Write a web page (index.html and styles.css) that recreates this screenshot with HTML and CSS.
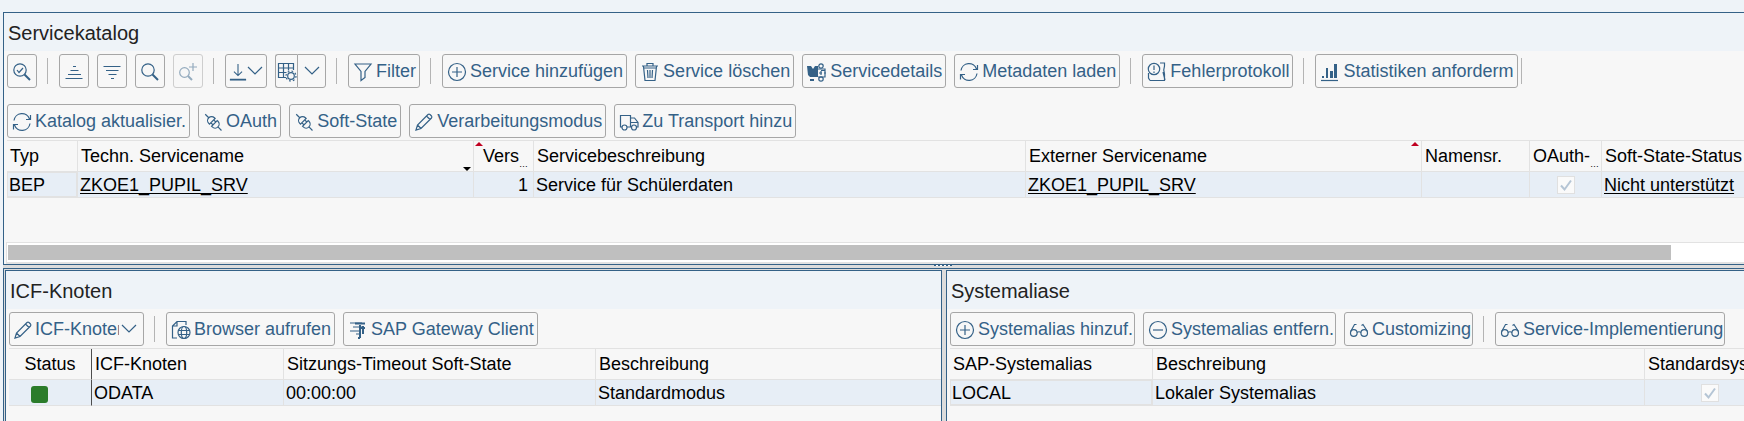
FILE: index.html
```html
<!DOCTYPE html>
<html lang="de">
<head>
<meta charset="utf-8">
<meta name="viewport" content="width=device-width, initial-scale=1">
<title>Servicekatalog</title>
<link rel="stylesheet" href="styles.css">
</head>
<body>
<svg class="defs" aria-hidden="true">
  <symbol id="i-refresh" viewBox="0 0 20 20"><path d="M2 8.500A8 8 0 0 1 17.500 7M18.500 3v4.500h-4.500M18 11.500A8 8 0 0 1 2.500 13M1.500 17.500V12.500h4.500"/></symbol>
  <symbol id="i-connect" viewBox="0 0 20 20"><g transform="rotate(45 10 10)"><path d="M-1 10h5M9 6H8a4 4 0 0 0 0 8h1zM9 8h3M9 12h3M12 6h1a4 4 0 0 1 0 8h-1zM17 10h5"/></g></symbol>
  <symbol id="i-pencil" viewBox="0 0 20 20"><path d="M2 18l1.500-5L14 2.500q1-.800 2 0l1.500 1.500q.800 1 0 2L7 16.500zM12.500 4l3.500 3.500M3.500 13L7 16.500"/></symbol>
  <symbol id="i-plus" viewBox="0 0 20 20"><circle cx="10" cy="10" r="8.500"/><path d="M10 5v10M5 10h10"/></symbol>
  <symbol id="i-minus" viewBox="0 0 20 20"><circle cx="10" cy="10" r="8.500"/><path d="M5 10h10"/></symbol>
  <symbol id="i-glasses" viewBox="0 0 20 20"><circle cx="4.800" cy="13" r="3.300"/><circle cx="15.200" cy="13" r="3.300"/><path d="M8 12.500q2-1.500 4 0M1.700 11.500L5.500 4.500h2M12.500 5.500l1.500-1 4.500 7"/></symbol>
  <symbol id="i-down" viewBox="0 0 16 20"><path d="M1 6l7 7 7-7"/></symbol>
  <symbol id="i-check" viewBox="0 0 18 18"><path d="M4 9.500l3.500 4L14 4.500"/></symbol>
</svg>

<main class="page">
  <section class="panel catalog">
    <h1 class="title">Servicekatalog</h1>
    <div class="toolbar">
      <div class="row">
        <button class="btn square" aria-label="Details"><svg class="icon" viewBox="0 0 20 20"><circle cx="8" cy="8" r="6.200"/><path d="M5 8l2 2.500L11 6"/><path class="bold" d="M12.500 12.500L18 18"/></svg></button>
        <span class="sep"></span>
        <button class="btn square" aria-label="Aufsteigend sortieren"><svg class="icon" viewBox="0 0 20 20"><path d="M9 4.500h3M6.500 8.500h8M4 12.500h13M1.500 16.500h17"/></svg></button>
        <button class="btn square" aria-label="Absteigend sortieren"><svg class="icon" viewBox="0 0 20 20"><path d="M1.500 4.500h17M4 8.500h12.500M6.500 12.500h8M9 16.500h3"/></svg></button>
        <button class="btn square" aria-label="Suchen"><svg class="icon" viewBox="0 0 20 20"><circle cx="8" cy="8" r="6.200"/><path class="bold" d="M12.500 12.500L18 18"/></svg></button>
        <button class="btn square" aria-label="Weitersuchen" disabled><svg class="icon" viewBox="0 0 20 20"><circle cx="6.500" cy="10.500" r="4.800"/><path d="M15 1v8M11 5h8"/><path class="bold" d="M10 14l4 4"/></svg></button>
        <span class="sep"></span>
        <button class="btn export" aria-label="Exportieren"><svg class="icon" viewBox="0 0 20 20"><path d="M10 1v13M5.500 9.500l4.500 4.500 4.500-4.500"/><path class="bold" d="M1 18.500h18"/></svg><svg class="chev"><use href="#i-down"/></svg></button>
        <span class="split">
          <button class="btn layout" aria-label="Layout"><svg class="icon" viewBox="0 0 20 20"><path d="M9 15.500H1.500V1.500h15V8M1.500 6h15M1.500 10.500h8M6.500 1.500v14M11.500 1.500v7"/><circle cx="14" cy="14" r="3.300"/><circle cx="14" cy="14" r="5" stroke-dasharray="1.800 2.100"/></svg></button><button class="btn menu" aria-label="Layoutmenü"><svg class="chev"><use href="#i-down"/></svg></button>
        </span>
        <span class="sep"></span>
        <button class="btn"><svg class="icon" viewBox="0 0 20 20"><path d="M2 2h16l-6 7.500v6L8 18.500v-9z"/></svg>Filter</button>
        <span class="sep"></span>
        <button class="btn"><svg class="icon"><use href="#i-plus"/></svg>Service hinzufügen</button>
        <button class="btn"><svg class="icon" viewBox="0 0 20 20"><path d="M2 4h16M7 3.500V1.500h6v2M3.500 4.500L5 18.500h10l1.500-14M4 6h12M7.500 8l.500 8M10 8v8M12.500 8l-.500 8"/></svg>Service löschen</button>
        <button class="btn"><svg class="icon" viewBox="0 0 20 20"><path class="fill" d="M0 4h4l2 3 2-3h3v11H3L1 13zM3 17h4v2H3z"/><circle cx="14" cy="4" r="2.200"/><circle cx="14" cy="17" r="2.200"/><path d="M11 7h7v8h-7M14 8.500h4M12 11h3M14 9v4M17 11h2"/></svg>Servicedetails</button>
        <button class="btn"><svg class="icon"><use href="#i-refresh"/></svg>Metadaten laden</button>
        <span class="sep"></span>
        <button class="btn"><svg class="icon" viewBox="0 0 20 20"><circle cx="7" cy="7" r="5.700"/><path d="M7 3.500v4.500M7 9.500v1.500M13 1h4.500v3q-1.500 4 0 8v6.500H3M1.500 11v5l1.500 2.500M16 10l2 8"/></svg>Fehlerprotokoll</button>
        <span class="sep"></span>
        <button class="btn"><svg class="icon" viewBox="0 0 20 20"><path d="M1 18.500h17"/><path class="fill" d="M2 14h2v2H2zM6 6h2v10H6zM10 9h3v7h-3zM14 2h3v14h-3z"/></svg>Statistiken anforderm</button>
        <span class="sep last"></span>
      </div>
      <div class="row">
        <button class="btn"><svg class="icon"><use href="#i-refresh"/></svg>Katalog aktualisier.</button>
        <button class="btn"><svg class="icon"><use href="#i-connect"/></svg>OAuth</button>
        <button class="btn"><svg class="icon"><use href="#i-connect"/></svg>Soft-State</button>
        <button class="btn"><svg class="icon"><use href="#i-pencil"/></svg>Verarbeitungsmodus</button>
        <button class="btn"><svg class="icon" viewBox="0 0 20 20"><path d="M3 15H1.500V3.500h10V15M8 15h4.500M11.500 6h4l3.500 4.500V15h-1.500M11.500 10.500H19"/><circle cx="5.500" cy="15.500" r="2.500"/><circle cx="15" cy="15.500" r="2.500"/></svg>Zu Transport hinzu</button>
      </div>
    </div>
    <div class="grid">
      <table>
        <colgroup><col class="c-typ"><col class="c-name"><col class="c-vers"><col class="c-desc"><col class="c-ext"><col class="c-ns"><col class="c-oauth"><col></colgroup>
        <thead>
          <tr><th>Typ</th><th>Techn. Servicename<i class="sorted"></i></th><th class="num"><i class="key"></i>Vers<span class="dots">…</span></th><th>Servicebeschreibung</th><th>Externer Servicename<i class="key end"></i></th><th>Namensr.</th><th>OAuth-<span class="dots">…</span></th><th>Soft-State-Status</th></tr>
        </thead>
        <tbody>
          <tr><td class="focus">BEP</td><td><a href="#srv">ZKOE1_PUPIL_SRV</a></td><td class="num">1</td><td>Service für Schülerdaten</td><td><a href="#ext">ZKOE1_PUPIL_SRV</a></td><td></td><td class="mid"><label class="tick"><input type="checkbox" checked disabled aria-label="OAuth"><svg><use href="#i-check"/></svg></label></td><td><a href="#state">Nicht unterstützt</a></td></tr>
        </tbody>
      </table>
    </div>
    <div class="scroll"><div class="thumb"></div></div>
  </section>

  <div class="splitter"><span class="grip"></span></div>

  <div class="lower">
    <section class="panel inner">
      <h2 class="title">ICF-Knoten</h2>
      <div class="toolbar">
        <div class="row">
          <button class="btn node"><svg class="icon"><use href="#i-pencil"/></svg><span class="clip">ICF-Knoten</span><svg class="chev"><use href="#i-down"/></svg></button>
          <span class="sep"></span>
          <button class="btn"><svg class="icon" viewBox="0 0 20 20"><path d="M6 18H1.500V6L6 1.500h9V5M1.500 6H6V1.500"/><circle cx="13" cy="12.500" r="6"/><ellipse cx="13" cy="12.500" rx="2.700" ry="6"/><path d="M7.500 10.500h11M7.500 14.500h11"/></svg>Browser aufrufen</button>
          <button class="btn"><svg class="icon" viewBox="0 0 20 20"><path d="M2 3h12M5 7h9M2 11h9M8 14h4"/><path class="bold" d="M7 3.500h10M12 5v13M12 18h-2M15 6v8M11 8h6"/></svg>SAP Gateway Client</button>
        </div>
      </div>
      <div class="grid">
        <table>
          <colgroup><col class="c-status"><col class="c-icf"><col class="c-time"><col></colgroup>
          <thead><tr><th class="mid">Status</th><th class="fixed">ICF-Knoten</th><th>Sitzungs-Timeout Soft-State</th><th>Beschreibung</th></tr></thead>
          <tbody><tr><td><span class="led" role="img" aria-label="Aktiv"></span></td><td class="fixed">ODATA</td><td>00:00:00</td><td>Standardmodus</td></tr></tbody>
        </table>
      </div>
    </section>
    <section class="panel inner open">
      <h2 class="title">Systemaliase</h2>
      <div class="toolbar">
        <div class="row tight">
          <button class="btn"><svg class="icon"><use href="#i-plus"/></svg>Systemalias hinzuf.</button>
          <button class="btn"><svg class="icon"><use href="#i-minus"/></svg>Systemalias entfern.</button>
          <button class="btn"><svg class="icon"><use href="#i-glasses"/></svg>Customizing</button>
          <span class="sep"></span>
          <button class="btn"><svg class="icon"><use href="#i-glasses"/></svg>Service-Implementierung</button>
        </div>
      </div>
      <div class="grid">
        <table class="wide">
          <colgroup><col class="c-alias"><col class="c-desc"><col class="c-std"></colgroup>
          <thead><tr><th>SAP-Systemalias</th><th>Beschreibung</th><th>Standardsystem</th></tr></thead>
          <tbody><tr><td class="focus">LOCAL</td><td>Lokaler Systemalias</td><td class="mid"><label class="tick"><input type="checkbox" checked disabled aria-label="Standardsystem"><svg><use href="#i-check"/></svg></label></td></tr></tbody>
        </table>
      </div>
    </section>
  </div>
</main>
</body>
</html>
```
FILE: styles.css
```css
* { box-sizing: border-box; }

html, body { height: 100%; }

body {
  margin: 0;
  overflow: hidden;
  background: #eef3f8;
  color: #000;
  font: 18px/24px "Liberation Sans", Arial, sans-serif;
}

.defs { position: absolute; width: 0; height: 0; }

.page {
  display: flex;
  flex-direction: column;
  min-height: 100%;
  padding: 12px 0 0 3px;
}

.panel {
  min-width: 0;
  background: #f7f7f7;
  border: 1px solid #346187;
}

.catalog { border-right: 0; }

.title {
  margin: 0;
  padding: 8px 4px 6px;
  background: #eef3f8;
  color: #222;
  font-size: 20px;
  font-weight: 400;
  line-height: 24px;
}

.toolbar {
  display: flex;
  flex-direction: column;
  gap: 16px;
  padding: 3px 3px 2px;
}

.row { display: flex; align-items: center; gap: 8px; }

.btn {
  display: flex;
  flex: none;
  align-items: center;
  gap: 3px;
  height: 34px;
  padding: 0 3px 0 4px;
  background: #f7f7f7;
  border: 1px solid #a6a6a6;
  border-radius: 3px;
  color: #346187;
  font: inherit;
  white-space: nowrap;
}

.btn:disabled { opacity: .5; }
.btn .icon { margin-top: 2px; }
.tight .btn { padding-right: 1px; }

.square { width: 30px; padding: 0 4px; }
.square .icon { width: 20px; }

.export { width: 42px; gap: 0; padding: 0 3px; }
.export .icon { width: 18px; }
.split { display: flex; }
.layout { width: 22px; padding: 0 1px; border-right: 0; border-radius: 3px 0 0 3px; }
.menu { justify-content: center; width: 29px; padding: 0; border-radius: 0 3px 3px 0; }

.node { gap: 2px; padding: 0 6px 0 3px; }
.clip { width: 84px; overflow: hidden; text-align: left; }

.icon, .chev, .tick svg {
  flex: none;
  fill: none;
  stroke: currentColor;
  stroke-width: 1.2;
}
.icon { width: 20px; height: 20px; }
.chev { width: 16px; height: 20px; }
.bold { stroke-width: 2; }
.fill { fill: currentColor; stroke: none; }

.sep {
  flex: none;
  width: 2px;
  height: 26px;
  margin: 0 2px;
  border-left: 1px solid #b4b4b4;
}
.last { margin-left: -5px; }

.grid {
  flex: 1;
  padding-left: 3px;
  overflow: hidden;
}
.catalog .grid { min-height: 102px; }

table {
  width: 100%;
  table-layout: fixed;
  border-collapse: separate;
  border-spacing: 0;
  border-top: 1px solid #e2e2e2;
}
.wide { width: 826px; }

.c-typ { width: 70px; }
.c-name { width: 396px; }
.c-vers { width: 60px; }
.c-desc { width: 492px; }
.c-ext { width: 396px; }
.c-ns { width: 108px; }
.c-oauth { width: 72px; }
.c-status { width: 82px; }
.c-icf { width: 192px; }
.c-time { width: 312px; }
.c-alias { width: 202px; }
.c-std { width: 132px; }

th, td {
  position: relative;
  padding: 0 0 0 2px;
  overflow: hidden;
  border-bottom: 1px solid #e2e2e2;
  border-left: 1px solid #e2e2e2;
  text-align: left;
  white-space: nowrap;
}
th { height: 31px; padding-left: 3px; font-weight: 400; }
td { height: 26px; background: #e7eef6; }
th:first-child, td:first-child { border-left: 0; }
.num { padding-right: 5px; text-align: right; }
.mid { padding: 0; text-align: center; }
.focus { box-shadow: inset -1px -1px #e2e2e2, inset 1px 1px #e2e2e2; }
.fixed { border-left-color: #4d4d4d; }

a {
  color: inherit;
  text-decoration: underline 1px;
  text-decoration-skip-ink: none;
  text-underline-offset: 2px;
}

.dots { font-size: 9px; line-height: 1; vertical-align: sub; }

.sorted {
  position: absolute;
  right: 2px;
  bottom: 0;
  border: 4px solid transparent;
  border-top-color: #000;
  border-bottom: 0;
}
.key {
  position: absolute;
  top: 1px;
  left: 1px;
  border: 4px solid transparent;
  border-bottom-color: #c00020;
  border-top: 0;
}
.key.end { right: 2px; left: auto; }

.tick {
  display: block;
  position: relative;
  width: 18px;
  height: 18px;
  margin: 0 auto;
}
.tick input {
  display: block;
  width: 18px;
  height: 18px;
  margin: 0;
  appearance: none;
  background: #fafafa;
  border: 1px solid #e0e0e0;
}
.tick svg {
  position: absolute;
  inset: 0;
  width: 18px;
  height: 18px;
  color: #b5c5d5;
  stroke-width: 2;
}

.led {
  display: block;
  width: 17px;
  height: 17px;
  margin: 3px 0 0 20px;
  border-radius: 3px;
  background: #2b7c2b;
}

.scroll {
  margin-left: 2px;
  padding: 2px 0 2px 1px;
  background: #fff;
  border: solid #e2e2e2;
  border-width: 1px 0 2px 1px;
}
.thumb { width: 95.8%; height: 15px; background: #bfbfbf; }

.splitter {
  display: flex;
  justify-content: center;
  height: 3px;
  padding-left: 138px;
  background: #dcdcdc;
}
.grip {
  width: 18px;
  height: 1px;
  background: repeating-linear-gradient(90deg, #346187 0 2px, #fff 2px 4px);
}

.lower {
  display: grid;
  flex: 1;
  grid-template-columns: 54fr 46fr;
  gap: 4px;
  padding: 1px 0 0 1px;
  background: #dcdcdc;
  border: solid #346187;
  border-width: 1px 0 0 1px;
}
.inner { display: flex; flex-direction: column; border-bottom: 0; }
.open { border-right: 0; }
```
